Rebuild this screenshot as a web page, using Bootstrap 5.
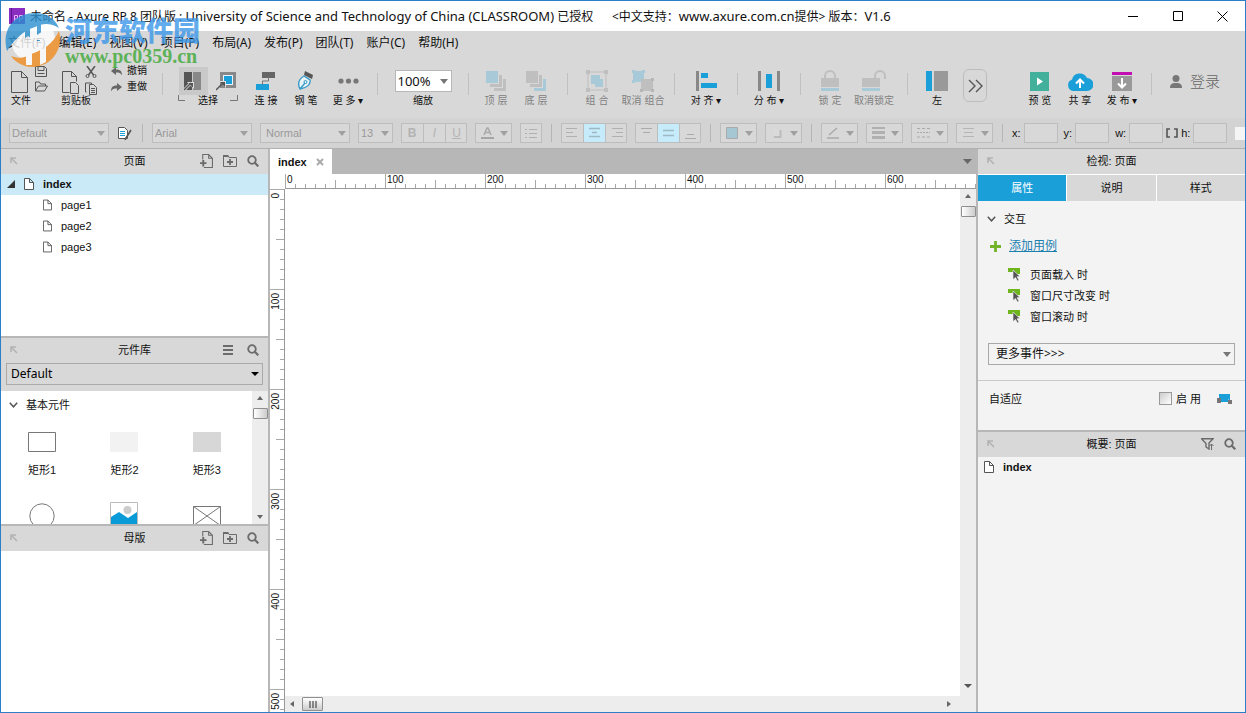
<!DOCTYPE html>
<html lang="zh-CN">
<head>
<meta charset="utf-8">
<meta name="viewport" content="width=device-width, initial-scale=1">
<title>Axure RP 8</title>
<link href="https://cdn.jsdelivr.net/npm/bootstrap@5.3.0/dist/css/bootstrap.min.css" rel="stylesheet">
<style>
:root { --line:#b7b7b7; --bar:#d8d8d8; --blue:#1b9fd9; --ink:#6b6b6b; }
body { font:12px/16px "Liberation Sans","Noto Sans CJK SC",sans-serif; color:#111; background:#fff; }
button, input, select { font:inherit; color:inherit; border-radius:0; }
button { background:none; border:0; padding:0; }
svg { display:block; flex:none; }
.app { height:100vh; border:1px solid #2a7fc6; overflow:hidden; }
.ui { font-family:"Noto Sans","Noto Sans CJK SC",sans-serif; }
.titlebar { height:30px; padding-left:8px; }
.titlebar .win { width:45px; height:28px; }
.caption-text { white-space:pre; margin-left:5px; }
.caption-text .latin { font-size:13px; }
.menubar { height:24px; background:var(--bar); padding-left:7px; gap:13px; }
.menubar a { color:#111; text-decoration:none; white-space:nowrap; }
.toolbar { height:63px; background:var(--bar); padding:10px 25px 0 10px; }
.files { gap:10px; }
.tool { display:flex; flex-direction:column; align-items:center; flex:none; font-size:10px; line-height:12px; white-space:nowrap; }
.tool > .pic { height:30px; padding-top:2px; display:flex; align-items:center; justify-content:center; }
.tool:disabled { color:#808080; }
.tool:disabled svg { opacity:.25; }
.t40 { width:40px; } .t44 { width:44px; } .t48 { width:48px; } .t76 { width:76px; }
.tsep { width:1px; height:22px; background:#c0c0c0; margin:8px 7px 0; flex:none; }
.picked { background:#c9c9c9; width:29px; height:28px; display:flex; align-items:center; justify-content:center; }
.field { appearance:none; border:1px solid var(--line); background:transparent; padding:0 5px; outline:0; }
select.field { background-image:url("data:image/svg+xml,%3Csvg xmlns='http://www.w3.org/2000/svg' width='8' height='5'%3E%3Cpath d='M0 0h8L4 5z' fill='%23777'/%3E%3C/svg%3E"); background-repeat:no-repeat; background-position:right 3px center; }
.zoombox { width:57px; height:22px; background-color:#fff; font-size:13px; padding:0 2px; }
.more { width:24px; height:33px; border:1px solid #bdbdbd; border-radius:6px; }
.login { font:300 15px/20px "Noto Sans CJK SC",sans-serif; color:#666; height:24px; padding-left:7px; }
.formatbar { height:31px; background:#d3d3d3; padding-left:8px; gap:8px; border-bottom:1px solid #b0b0b0; font-size:11px; }
.formatbar > * { flex:none; }
.formatbar .field { height:20px; border-color:#bdbdbd; background-color:#d8d8d8; }
.formatbar select.field { color:#999; padding:0 2px; background-image:url("data:image/svg+xml,%3Csvg xmlns='http://www.w3.org/2000/svg' width='8' height='5'%3E%3Cpath d='M0 0h8L4 5z' fill='%23a0a0a0'/%3E%3C/svg%3E"); }
.formatbar select.field:disabled { opacity:1; }
.w100 { width:100px; } .w90 { width:90px; } .w35 { width:35px; } .w34 { width:34px; } .w16 { width:16px; }
.coords { gap:6px; }
.coords > div { display:flex; align-items:center; gap:3px; }
.fsep { width:1px; height:18px; background:#b5b5b5; margin:0 1px; }
.btns { display:flex; height:20px; background:#d8d8d8; box-shadow:inset 0 0 0 1px #bdbdbd; }
.btns button { width:22px; display:flex; align-items:center; justify-content:center; color:#b3b3b3; font-size:12px; line-height:14px; }
.btns button + button { border-left:1px solid #bdbdbd; }
.btns button.chosen { background:#c6ecfb; border-top:1px solid #bdbdbd; border-bottom:1px solid #bdbdbd; }
.btns button.wide { width:37px; justify-content:space-between; padding:0 4px 0 6px; }
.side { flex:0 0 267px; min-width:0; }
.split-v, .split-h { flex:0 0 2px; background:var(--line); }
.panehead { flex:0 0 25px; background:var(--bar); display:grid; grid-template-columns:1fr auto 1fr; align-items:center; padding:0 9px 1px; font-size:11px; }
.panehead .acts { justify-self:end; display:flex; gap:10px; align-items:center; }
.panehead .acts.loose { gap:14px; }
.pages { flex:0 0 162px; }
.tree { list-style:none; margin:0; padding:0; font-size:11px; }
.tree a { height:21px; display:flex; align-items:center; color:#111; text-decoration:none; padding:0 0 1px 42px; gap:9px; }
.tree a.root, .tree a.flat { font-weight:bold; padding-left:6px; }
.tree a.root { background:#cbeaf7; }
.libpick { background:var(--bar); padding:0 5px 6px; flex:none; }
.libpick select.field { width:100%; height:22px; color:#000; padding:0 4px; border-color:#aaa; font-size:12px; background-image:url("data:image/svg+xml,%3Csvg xmlns='http://www.w3.org/2000/svg' width='8' height='5'%3E%3Cpath d='M0 0h8L4 4z' fill='%23000'/%3E%3C/svg%3E"); }
.lib { flex:0 0 133px; overflow:hidden; font-size:11px; }
.libhead { height:27px; padding-left:8px; }
.shape { height:74px; padding-top:10px; text-align:center; }
.shape .pic { height:28px; display:flex; align-items:center; justify-content:center; margin-bottom:6px; }
.sbar { flex:0 0 16px; background:#ededed; display:flex; flex-direction:column; align-items:center; padding:5px 0; gap:8px; }
.sbar.flat { flex-direction:row; padding:0 9px 0 5px; }
.thumb { width:15px; height:11px; border:1px solid #8f8f8f; border-radius:1px; background:linear-gradient(90deg,#fff,#ccc); }
.sbar.flat .thumb { width:21px; height:14px; background:linear-gradient(#fff,#ccc); display:flex; justify-content:center; align-items:center; }
.tabs { flex:0 0 25px; background:var(--line); }
.doctab { background:#fff; width:62px; padding-left:8px; font-weight:bold; font-size:11px; gap:9px; }
.ruler-x { flex:0 0 15px; margin-left:15px; display:flex; overflow:hidden; border-bottom:1px solid #999; font-size:10px; line-height:12px;
  background:repeating-linear-gradient(90deg,#aaa 0 1px,transparent 1px 100px) 0 0/100% 100%,
  repeating-linear-gradient(90deg,transparent 0 50px,#aaa 50px 51px,transparent 51px 100px) 0 100%/100% 8px no-repeat,
  repeating-linear-gradient(90deg,#aaa 0 1px,transparent 1px 10px) 0 100%/100% 4px no-repeat; }
.ruler-x span { flex:0 0 100px; padding-left:2px; }
.ruler-y { flex:0 0 15px; overflow:hidden; border-right:1px solid #999; font-size:10px; line-height:11px;
  background:repeating-linear-gradient(180deg,#aaa 0 1px,transparent 1px 100px) 0 0/100% 100%,
  repeating-linear-gradient(180deg,transparent 0 50px,#aaa 50px 51px,transparent 51px 100px) 100% 0/8px 100% no-repeat,
  repeating-linear-gradient(180deg,#aaa 0 1px,transparent 1px 10px) 100% 0/4px 100% no-repeat; }
.ruler-y div { height:100px; padding-top:4px; }
.ruler-y span { display:block; writing-mode:vertical-rl; transform:rotate(180deg); width:11px; }
.inspect { background:#f3f3f3; }
.proptabs { display:grid; grid-template-columns:repeat(3,1fr); gap:1px; flex:0 0 27px; background:#fff; border-top:1px solid #fff; }
.proptabs button { background:var(--bar); font-size:11px; }
.proptabs button.active { background:var(--blue); color:#fff; }
.section-head { padding:10px 0 0 9px; font-size:11px; }
.addrow { margin:11px 0 10px; padding-left:12px; }
.events { list-style:none; margin:0 0 16px; padding:0 0 0 30px; }
.events li { height:21px; display:flex; align-items:center; gap:9px; font-size:11px; }
.addcase { color:#1b80b0; font-size:12px; }
.moreev { height:22px; margin:0 10px 15px; padding:0 7px; border-color:#a9a9a9; flex:none; }
.adapt { border-top:1px solid #c9c9c9; flex:0 0 50px; padding:0 13px 14px 11px; font-size:11px; }
.tick { appearance:none; width:13px; height:13px; border:1px solid #999; background:linear-gradient(135deg,#ccc,#fff); margin:0; }
.tick.plain { border:0; background:#f5f5f5; }
.stamp { position:absolute; left:4px; top:10px; pointer-events:none; opacity:.8; }
.stamp .cn { font:900 27px/30px "Noto Sans CJK SC",sans-serif; color:#3b97e8; white-space:nowrap; }
.stamp .url { font:bold 20px/22px "Liberation Serif",serif; color:#3fa938; }
</style>
</head>
<body>
<svg width="0" height="0" class="position-absolute" aria-hidden="true">
  <symbol id="pin" viewBox="0 0 8 8"><path d="M1 6V1h5M1 1l6 6" fill="none" stroke="#b3b3b3" stroke-width="1.6"/></symbol>
  <symbol id="doc" viewBox="0 0 10 12"><path d="M.5.5h5l4 4v7h-9zM5.500.5v4h4" fill="#fff" stroke="#555"/></symbol>
  <symbol id="find" viewBox="0 0 12 12"><circle cx="5" cy="5" r="3.800" fill="none" stroke="#6b6b6b" stroke-width="1.800"/><path d="M7.800 7.800l3.500 3.500" stroke="#6b6b6b" stroke-width="2.200"/></symbol>
  <symbol id="addpage" viewBox="0 0 12 13"><path d="M2.500 5V.5h5.500l3.500 3.500v8.500h-8M8 .5V4h3.500" fill="none" stroke="#6b6b6b"/><path d="M0 8.500h6M3 5.500v6" stroke="#6b6b6b" stroke-width="1.800"/></symbol>
  <symbol id="addfolder" viewBox="0 0 14 12"><path d="M.5 11.500V.500h4.500l1 2h7.500v9z" fill="none" stroke="#6b6b6b"/><path d="M0 0h5l1 2H0z" fill="#6b6b6b"/><path d="M4 7h6M7 4v6" stroke="#6b6b6b" stroke-width="1.800"/></symbol>
  <symbol id="down" viewBox="0 0 8 5"><path d="M0 0h8L4 5z" fill="#a0a0a0"/></symbol>
  <symbol id="chev" viewBox="0 0 9 6"><path d="M.8.8l3.700 4L8.200.8" fill="none" stroke="#555" stroke-width="1.500"/></symbol>
  <symbol id="evt" viewBox="0 0 13 13"><path d="M0 0h12v6H9L6 3v3l-1-2H0z" fill="#6fb51d"/><path d="M5 2l7 6.500-3 .2 2 3.300-1.500 1-2-3.500L5 11.500z" fill="#555" stroke="#f3f3f3" stroke-width=".6"/></symbol>
</svg>

<div class="app d-flex flex-column position-relative">
  <header class="titlebar ui d-flex align-items-center flex-shrink-0">
    <svg width="16" height="16" viewBox="0 0 16 16"><path fill="#8a2dc0" d="M0 0h16v16H0z"/><path fill="#5a1692" d="M2 0h1v16H2z"/><path d="M5.500 14V7.500h3v3.500h-3M10.500 14V7.500h3v3.500h-3" fill="none" stroke="#e5b8ff"/></svg>
    <span class="caption-text">未命名 - Axure RP 8 团队版 : <span class="latin">University of Science and Technology of China (CLASSROOM)</span> 已授权      &lt;中文支持：<span class="latin">www.axure.com.cn</span>提供&gt; 版本：<span class="latin">V1.6</span></span>
    <div class="ms-auto d-flex">
      <button class="win d-flex align-items-center justify-content-center" aria-label="最小化"><svg width="10" height="10"><path d="M0 5.500h10" stroke="#000"/></svg></button>
      <button class="win d-flex align-items-center justify-content-center" aria-label="最大化"><svg width="10" height="10"><path d="M.5.5h9v9h-9z" fill="none" stroke="#000"/></svg></button>
      <button class="win d-flex align-items-center justify-content-center" aria-label="关闭"><svg width="11" height="11"><path d="M.5.5l10 10M10.500.5l-10 10" stroke="#000"/></svg></button>
    </div>
  </header>

  <nav class="menubar ui d-flex align-items-center flex-shrink-0">
    <a href="#">文件(F)</a><a href="#">编辑(E)</a><a href="#">视图(V)</a><a href="#">项目(P)</a><a href="#">布局(A)</a><a href="#">发布(P)</a><a href="#">团队(T)</a><a href="#">账户(C)</a><a href="#">帮助(H)</a>
  </nav>

  <div class="toolbar d-flex flex-shrink-0">
    <div class="files d-flex">
      <button class="tool t40 align-items-start"><span class="pic"><svg width="38" height="30" viewBox="0 0 38 30" fill="none" stroke="#555"><path d="M.5 5.500h10l6 6v15H.5zM10.500 5.500v6h6"/><path d="M24.500.5h9l2 2v8h-11zM27 .5v4h6v-4M26.500 7.500h7" /><path d="M24.500 27v-9h4l1 2h5v2M24.500 27l3-5h9l-3 5z" transform="translate(0 -2)"/></svg></span>文件</button>
      <button class="tool t40 align-items-start"><span class="pic"><svg width="38" height="30" viewBox="0 0 38 30" fill="none" stroke="#555"><path d="M8.500 26.500h-7v-21h9l5 5v5M10.500 5.500v5h5"/><path d="M9.500 16.500h5l3 3v8h-8z"/><path d="M26 0l6.500 9M34 0l-6.500 9" stroke-width="1.500"/><circle cx="26.500" cy="10" r="1.500"/><circle cx="33.500" cy="10" r="1.500"/><path d="M25.500 26h-1v-9h6v1M28.500 18.500h4l3 3v7h-7zM30 22.500h4M30 24.500h4M30 26.500h4"/></svg></span>剪贴板</button>
      <div class="d-flex flex-column t44 gap-1">
        <button class="tool flex-row gap-1 align-items-center"><svg width="12" height="9"><path d="M0 4l5-4v2.500c4 0 6 1.500 6 6C10 6 8 5.500 5 5.500V8z" fill="#666"/></svg>撤销</button>
        <button class="tool flex-row gap-1 align-items-center"><svg width="12" height="9"><path d="M11 4L6 0v2.500C2 2.500 0 4 0 8.500 1 6 3 5.500 6 5.500V8z" fill="#666"/></svg>重做</button>
      </div>
    </div>
    <div class="tsep"></div>
    <button class="tool t76"><span class="pic gap-2"><span class="picked"><svg width="18" height="19"><path d="M0 0h8v18H0z" fill="#555"/><path d="M9 0h8v18H9z" fill="#888"/><path d="M0 18l6-6" stroke="#ddd" stroke-width="3"/><path d="M3 10h7v7z" fill="#ddd"/><path d="M0 18l7-7" stroke="#555" stroke-width="1.500"/><path d="M4.500 11H9v4.500z" fill="#555"/></svg></span><svg width="22" height="20"><path d="M5.500 2.500h13v13h-13z" fill="#e8f4fa" stroke="#888" stroke-width="3"/><path d="M8 5h8v8H8z" fill="#1b9fd9"/><path d="M3 10h7v7z" fill="#ddd"/><path d="M0 19l7-7" stroke="#555" stroke-width="1.500"/><path d="M4 11h5v5z" fill="#555"/></svg></span><span class="d-flex gap-2"><svg width="8" height="8" class="me-1"><path d="M.5 0v5.500H7" fill="none" stroke="#777"/></svg>选择<svg width="8" height="8" class="ms-1"><path d="M7.500 0v5.500H0" fill="none" stroke="#777"/></svg></span></button>
    <button class="tool t40"><span class="pic"><svg width="20" height="20"><path d="M6 1h13v6H6z" fill="#666"/><path d="M0 13h13v6H0z" fill="#1b9fd9"/><path d="M12.500 6v4h-6v4" stroke="#777" fill="none"/></svg></span>连 接</button>
    <button class="tool t40"><span class="pic"><svg width="16" height="20"><path d="M2 18C-1 12 1 8 6 5l6 4c1 4-3 8-10 9zM2 18l5-6" fill="#e8f3f8" stroke="#3298c5" stroke-width="1.300"/><circle cx="7.500" cy="11" r="1.500" fill="none" stroke="#3298c5"/><path d="M7 0l8 4-1 4-8-4z" fill="#555"/></svg></span>钢 笔</button>
    <button class="tool t44"><span class="pic"><svg width="21" height="6" fill="#777"><circle cx="3" cy="3" r="2.600"/><circle cx="10.500" cy="3" r="2.600"/><circle cx="18" cy="3" r="2.600"/></svg></span><span>更 多 ▾</span></button>
    <div class="tsep"></div>
    <div class="tool t76"><span class="pic"><select id="zoom" class="field zoombox ui"><option>100%</option></select></span><label for="zoom">缩放</label></div>
    <div class="tsep"></div>
    <button class="tool t40" disabled><span class="pic"><svg width="20" height="20"><path d="M0 0h12v12H0z" fill="#1b9fd9"/><path d="M13 4h3v12H4v-3h9zM17 8h3v12H8v-3h9z" fill="#777"/></svg></span>顶 层</button>
    <button class="tool t40 me-1" disabled><span class="pic"><svg width="20" height="20"><path d="M0 0h12v12H0zM13 4h3v12H4v-3h9z" fill="#777"/><path d="M17 8h3v12H8v-3h9z" fill="#1b9fd9"/></svg></span>底 层</button>
    <div class="tsep"></div>
    <button class="tool t44" disabled><span class="pic"><svg width="22" height="22"><path d="M2 2h18v18H2z" fill="none" stroke="#777"/><path d="M0 0h4v4H0zM18 0h4v4h-4zM0 18h4v4H0zM18 18h4v4h-4z" fill="#777"/><path d="M5 5h9v4h3v8H9v-3H5z" fill="#1b9fd9"/></svg></span>组 合</button>
    <button class="tool t48" disabled><span class="pic"><svg width="22" height="22"><path d="M1 1h11v11H1z" fill="#1b9fd9"/><path d="M0 0h3v3H0zM10 0h3v3h-3zM0 10h3v3H0z" fill="#1b9fd9"/><path d="M9 9h12v12H9z" fill="#777"/><path d="M19 8h3v3h-3zM8 19h3v3H8zM19 19h3v3h-3z" fill="#555"/></svg></span>取消 组合</button>
    <div class="tsep"></div>
    <button class="tool t48"><span class="pic"><svg width="21" height="20"><path d="M0 0h3v20H0z" fill="#888"/><path d="M5 2h7v5H5zM5 12h16v5H5z" fill="#1b9fd9"/></svg></span><span>对 齐 ▾</span></button>
    <div class="tsep"></div>
    <button class="tool t48"><span class="pic"><svg width="22" height="20"><path d="M0 0h3v20H0zM19 0h3v20h-3z" fill="#888"/><path d="M8 3h6v14H8z" fill="#1b9fd9"/></svg></span><span>分 布 ▾</span></button>
    <div class="tsep"></div>
    <button class="tool t44" disabled><span class="pic"><svg width="18" height="22"><path d="M4 9V6a5 5 0 0110 0v3" fill="none" stroke="#777" stroke-width="2"/><path d="M0 8h18v9H0z" fill="#777"/><path d="M0 18h18v3H0z" fill="#1b9fd9"/></svg></span>锁 定</button>
    <button class="tool t44 me-1" disabled><span class="pic"><svg width="25" height="22"><path d="M13 9V6a5 5 0 0110 0v3" fill="none" stroke="#777" stroke-width="2"/><path d="M0 8h18v9H0z" fill="#777"/><path d="M0 18h18v3H0z" fill="#1b9fd9"/></svg></span>取消锁定</button>
    <div class="tsep"></div>
    <button class="tool t44"><span class="pic"><svg width="22" height="20"><path d="M0 0h6v20H0z" fill="#1b9fd9"/><path d="M8 0h14v20H8z" fill="#999"/></svg></span>左</button>
    <button class="more d-flex align-items-center justify-content-center mt-1 ms-1" aria-label="更多工具"><svg width="15" height="14"><path d="M1 1l6 6-6 6M8 1l6 6-6 6" fill="none" stroke="#555" stroke-width="1.400"/></svg></button>
    <div class="d-flex ms-auto">
      <button class="tool t40"><span class="pic"><svg width="19" height="19"><path d="M0 0h19v19H0z" fill="#43b09c"/><path d="M7 5.500l6 4-6 4z" fill="#fff"/></svg></span>预 览</button>
      <button class="tool t40"><span class="pic"><svg width="26" height="19"><path d="M6 19a6 6 0 01-1-11.500A8 8 0 0120 6a6.500 6.500 0 010 13z" fill="#1b9fd9"/><path d="M13 16V8M9 11.500l4-4 4 4" fill="none" stroke="#fff" stroke-width="2"/></svg></span>共 享</button>
      <button class="tool t44"><span class="pic"><svg width="20" height="19"><path d="M0 0h20v3H0z" fill="#c30fb0"/><path d="M0 4h20v15H0z" fill="#999"/><path d="M10 6v9M6 11.500l4 4 4-4" fill="none" stroke="#fff" stroke-width="2"/></svg></span><span>发 布 ▾</span></button>
      <div class="tsep"></div>
      <button class="login d-flex align-items-center gap-2 ms-1 mt-1 text-nowrap"><svg width="12" height="13" fill="#777"><circle cx="6" cy="3.500" r="3.500"/><path d="M0 13c0-4 2-5 6-5s6 1 6 5z"/></svg>登录</button>
    </div>
  </div>

  <div class="formatbar d-flex align-items-center flex-shrink-0">
    <select class="field w100" aria-label="样式" disabled><option>Default</option></select>
    <button class="w16 d-flex justify-content-center" aria-label="编辑样式"><svg width="14" height="13"><path d="M.5.5h6l3 3v8h-9z" fill="#fff" stroke="#555"/><path d="M2 4.500h5M2 6.500h5M2 8.500h5" stroke="#1b9fd9"/><path d="M13 3l-5 8-1 2" stroke="#555" stroke-width="1.600"/></svg></button>
    <div class="fsep"></div>
    <select class="field w100" aria-label="字体" disabled><option>Arial</option></select>
    <select class="field w90" aria-label="字重" disabled><option>&nbsp;Normal</option></select>
    <select class="field w35" aria-label="字号" disabled><option>13</option></select>
    <div class="btns"><button class="fw-bold">B</button><button class="fst-italic">I</button><button class="text-decoration-underline">U</button></div>
    <div class="btns"><button class="wide" aria-label="文字颜色"><svg width="13" height="12"><path d="M3 8l3-7h1l3 7M4.500 5.500h4" fill="none" stroke="#aaa" stroke-width="1.600"/><path d="M0 10h13v2H0z" fill="#a5a5a5"/></svg><svg width="8" height="5"><use href="#down"/></svg></button></div>
    <div class="btns"><button aria-label="项目符号"><svg width="12" height="9"><path d="M0 .5h2M4 .5h8M0 4.500h2M4 4.500h8M0 8.500h2M4 8.500h8" stroke="#b0b0b0"/></svg></button></div>
    <div class="fsep"></div>
    <div class="btns"><button aria-label="左对齐"><svg width="13" height="12"><path d="M0 1.500h11M0 5.500h7M0 9.500h11" stroke="#b0b0b0"/></svg></button><button class="chosen" aria-label="居中"><svg width="13" height="12"><path d="M1 1.500h11M4 5.500h5M1 9.500h11" stroke="#9fb9c2" stroke-width="1.500"/></svg></button><button aria-label="右对齐"><svg width="13" height="12"><path d="M2 1.500h11M6 5.500h7M2 9.500h11" stroke="#b0b0b0"/></svg></button></div>
    <div class="btns"><button aria-label="顶部"><svg width="11" height="12"><path d="M0 1.500h11M2 5.500h7" stroke="#aaa"/></svg></button><button class="chosen" aria-label="中部"><svg width="11" height="12"><path d="M0 3.500h11M0 8.500h11" stroke="#9fb9c2" stroke-width="1.500"/></svg></button><button aria-label="底部"><svg width="11" height="12"><path d="M2 7.500h7M0 11.500h11" stroke="#aaa"/></svg></button></div>
    <div class="fsep"></div>
    <div class="btns"><button class="wide" aria-label="填充"><svg width="12" height="12"><path d="M.5.5h11v11H.5z" fill="#a5c6d3" stroke="#aaa"/></svg><svg width="8" height="5"><use href="#down"/></svg></button></div>
    <div class="btns"><button class="wide" aria-label="阴影"><svg width="12" height="12"><path d="M2 2h7v7H2z" fill="#dadada"/><path d="M9.500 3v7H3" fill="none" stroke="#bbb" stroke-width="2"/></svg><svg width="8" height="5"><use href="#down"/></svg></button></div>
    <div class="fsep"></div>
    <div class="btns"><button class="wide" aria-label="线条颜色"><svg width="13" height="12"><path d="M2 8l8-7" stroke="#aaa" stroke-width="1.500"/><path d="M0 11h12" stroke="#aaa" stroke-width="1.500"/></svg><svg width="8" height="5"><use href="#down"/></svg></button></div>
    <div class="btns"><button class="wide" aria-label="线宽"><svg width="13" height="12"><path d="M0 0h13v2H0zM0 4h13v3H0zM0 9h13v3H0z" fill="#b0b0b0"/></svg><svg width="8" height="5"><use href="#down"/></svg></button></div>
    <div class="btns"><button class="wide" aria-label="线型"><svg width="13" height="12" stroke="#aaa"><path d="M0 1.500h13" stroke-dasharray="3 2"/><path d="M0 5.500h13" stroke-dasharray="2 1"/><path d="M0 10h13" stroke-dasharray="3 2"/></svg><svg width="8" height="5"><use href="#down"/></svg></button></div>
    <div class="btns"><button class="wide" aria-label="箭头"><svg width="13" height="12"><path d="M1 1.500h11M2 5.500h9M1 9.500h11" stroke="#b5b5b5"/></svg><svg width="8" height="5"><use href="#down"/></svg></button></div>
    <div class="fsep"></div>
    <div class="coords d-flex">
      <div><label for="fx">x:</label><input id="fx" class="field w34"></div>
      <div><label for="fy">y:</label><input id="fy" class="field w34"></div>
      <div><label for="fw">w:</label><input id="fw" class="field w34"><svg width="12" height="10"><path d="M4 1H1v8h3M8 1h3v8H8" fill="none" stroke="#555" stroke-width="1.600"/></svg><label for="fh">h:</label><input id="fh" class="field w34"></div>
    </div>
    <input type="checkbox" class="tick plain" aria-label="隐藏">
  </div>

  <main class="d-flex flex-grow-1" style="min-height:0">
    <aside class="side d-flex flex-column">
      <div class="panehead"><svg width="8" height="8"><use href="#pin"/></svg><span>页面</span><span class="acts"><button aria-label="添加页面"><svg width="13" height="14"><use href="#addpage"/></svg></button><button aria-label="添加文件夹"><svg width="14" height="12"><use href="#addfolder"/></svg></button><button aria-label="搜索"><svg width="12" height="12"><use href="#find"/></svg></button></span></div>
      <div class="pages">
        <ul class="tree">
          <li><a class="root" href="#"><svg width="8" height="8"><path d="M8 0v8H0z" fill="#333"/></svg><svg width="10" height="12"><use href="#doc"/></svg>index</a></li>
          <li><a href="#"><svg width="9" height="12"><use href="#doc"/></svg>page1</a></li>
          <li><a href="#"><svg width="9" height="12"><use href="#doc"/></svg>page2</a></li>
          <li><a href="#"><svg width="9" height="12"><use href="#doc"/></svg>page3</a></li>
        </ul>
      </div>
      <div class="split-h"></div>
      <div class="panehead"><svg width="8" height="8"><use href="#pin"/></svg><span>元件库</span><span class="acts loose"><button aria-label="菜单"><svg width="10" height="10"><path d="M0 1h10M0 5h10M0 9h10" stroke="#6b6b6b" stroke-width="1.800"/></svg></button><button aria-label="搜索"><svg width="12" height="12"><use href="#find"/></svg></button></span></div>
      <div class="libpick"><select class="field ui" aria-label="元件库"><option>Default</option></select></div>
      <div class="lib d-flex">
        <div class="flex-grow-1 overflow-hidden">
          <div class="libhead d-flex align-items-center gap-2"><svg width="9" height="6"><use href="#chev"/></svg>基本元件</div>
          <div class="row g-0 pe-1">
            <div class="col-4 shape"><div class="pic"><svg width="28" height="20"><path d="M.5.5h27v19H.5z" fill="#fff" stroke="#777"/></svg></div>矩形1</div>
            <div class="col-4 shape"><div class="pic"><svg width="28" height="20"><path d="M0 0h28v20H0z" fill="#f2f2f2"/></svg></div>矩形2</div>
            <div class="col-4 shape"><div class="pic"><svg width="28" height="20"><path d="M0 0h28v20H0z" fill="#d7d7d7"/></svg></div>矩形3</div>
            <div class="col-4 shape"><div class="pic"><svg width="26" height="26"><circle cx="13" cy="13" r="12.200" fill="#fff" stroke="#777"/></svg></div></div>
            <div class="col-4 shape"><div class="pic"><svg width="28" height="28"><path d="M.5.5h27v27H.5z" fill="#fff" stroke="#bbb"/><circle cx="17.500" cy="8" r="4" fill="#ccc"/><path d="M1 15l8-5 9 6 9-6v17H1z" fill="#0b9ad8"/></svg></div></div>
            <div class="col-4 shape"><div class="pic"><svg width="28" height="20"><path d="M.5.5h27v19H.5zL27.500 19.500M27.500.5L.5 19.500" fill="#fff" stroke="#777"/></svg></div></div>
          </div>
        </div>
        <div class="sbar"><svg width="6" height="4"><path d="M3 0l3 4H0z" fill="#666"/></svg><div class="thumb"></div><svg width="6" height="4" class="mt-auto"><path d="M0 0h6L3 4z" fill="#666"/></svg></div>
      </div>
      <div class="split-h"></div>
      <div class="panehead"><svg width="8" height="8"><use href="#pin"/></svg><span>母版</span><span class="acts"><button aria-label="添加母版"><svg width="13" height="14"><use href="#addpage"/></svg></button><button aria-label="添加文件夹"><svg width="14" height="12"><use href="#addfolder"/></svg></button><button aria-label="搜索"><svg width="12" height="12"><use href="#find"/></svg></button></span></div>
      <div class="flex-grow-1 bg-white"></div>
    </aside>
    <div class="split-v"></div>

    <section class="d-flex flex-column flex-grow-1" style="min-width:0">
      <div class="tabs d-flex justify-content-between align-items-stretch">
        <div class="doctab d-flex align-items-center">index<button aria-label="关闭标签"><svg width="8" height="8"><path d="M1 1l6 6M7 1L1 7" stroke="#aaa" stroke-width="2"/></svg></button></div>
        <button class="px-1" aria-label="标签列表"><svg width="9" height="5"><path d="M0 0h9L4.500 5z" fill="#666"/></svg></button>
      </div>
      <div class="ruler-x"><span>0</span><span>100</span><span>200</span><span>300</span><span>400</span><span>500</span><span>600</span></div>
      <div class="d-flex flex-grow-1" style="min-height:0">
        <div class="ruler-y"><div><span>0</span></div><div><span>100</span></div><div><span>200</span></div><div><span>300</span></div><div><span>400</span></div><div><span>500</span></div></div>
        <div class="d-flex flex-column flex-grow-1">
          <div class="flex-grow-1 bg-white"></div>
          <div class="sbar flat"><svg width="4" height="6"><path d="M4 0v6L0 3z" fill="#666"/></svg><div class="thumb"><svg width="8" height="7"><path d="M1 0v7M4 0v7M7 0v7" stroke="#666" stroke-width="1.500"/></svg></div><svg width="4" height="6" class="ms-auto"><path d="M0 0v6l4-3z" fill="#666"/></svg></div>
        </div>
        <div class="sbar pb-4"><svg width="6" height="4"><path d="M3 0l3 4H0z" fill="#666"/></svg><div class="thumb"></div><svg width="8" height="4" class="mt-auto"><path d="M0 0h8L4 4z" fill="#555"/></svg></div>
      </div>
    </section>
    <div class="split-v"></div>

    <aside class="side inspect d-flex flex-column">
      <div class="panehead"><svg width="8" height="8"><use href="#pin"/></svg><span>检视: 页面</span></div>
      <div class="proptabs"><button class="active">属性</button><button>说明</button><button>样式</button></div>
      <div class="section-head d-flex align-items-center gap-2"><svg width="9" height="6"><use href="#chev"/></svg>交互</div>
      <div class="addrow d-flex align-items-center gap-2"><svg width="11" height="11"><path d="M5.500 0v11M0 5.500h11" stroke="#72b32b" stroke-width="2.800"/></svg><a class="addcase" href="#">添加用例</a></div>
      <ul class="events"><li><svg width="13" height="13"><use href="#evt"/></svg>页面载入 时</li><li><svg width="13" height="13"><use href="#evt"/></svg>窗口尺寸改变 时</li><li><svg width="13" height="13"><use href="#evt"/></svg>窗口滚动 时</li></ul>
      <select class="field moreev ui" aria-label="更多事件"><option>更多事件&gt;&gt;&gt;</option></select>
      <div class="adapt d-flex align-items-center"><span>自适应</span><input id="ad" type="checkbox" class="tick ms-auto me-1"><label for="ad">启 用</label><svg width="15" height="10" class="ms-3"><path d="M2 0h11v7l-2-2H5v3H2z" fill="#1b9fd9"/><path d="M0 4h4v5H0zM11 6h4v4h-4z" fill="#777"/><path d="M5 4h6v4H5z" fill="#1b9fd9"/></svg></div>
      <div class="split-h"></div>
      <div class="panehead"><svg width="8" height="8"><use href="#pin"/></svg><span>概要: 页面</span><span class="acts"><button aria-label="筛选"><svg width="13" height="12"><path d="M.5.8h11.500L8 5v6L5 9V5.500z" fill="none" stroke="#6b6b6b" stroke-width="1.400"/><path d="M10.500 12V6M8.500 8l2-2 2 2" fill="none" stroke="#6b6b6b"/></svg></button><button aria-label="搜索"><svg width="12" height="12"><use href="#find"/></svg></button></span></div>
      <ul class="tree"><li><a href="#" class="flat"><svg width="10" height="12"><use href="#doc"/></svg>index</a></li></ul>
    </aside>
  </main>

  <div class="stamp d-flex gap-1">
    <svg width="56" height="58" viewBox="0 0 56 58">
      <circle cx="28" cy="29" r="22" fill="#fff"/>
      <path d="M2 40C-4 18 10 2 30 2c12 0 20 6 24 15-8-5-16-5-24-1C19 19 10 28 2 40z" fill="#2b8fd0"/>
      <path d="M54 20c5 18-8 36-26 36-10 0-18-5-22-11 8 3 14 2 20-2 12-4 22-10 28-23z" fill="#f08c1e"/>
      <path d="M20 18h5v15h-5zM32 10l4-2v22h-4z" fill="#2b8fd0"/>
      <path d="M14 31l9-6 4 3v26h-6V34h-7zM29 26l9-6 8 6v3h-5v22l-6 3V29h-6z" fill="#fff"/>
    </svg>
    <div class="pt-1"><div class="cn">河东软件园</div><div class="url">www.pc0359.cn</div></div>
  </div>
</div>
<script src="https://cdn.jsdelivr.net/npm/bootstrap@5.3.0/dist/js/bootstrap.bundle.min.js"></script>
</body>
</html>
